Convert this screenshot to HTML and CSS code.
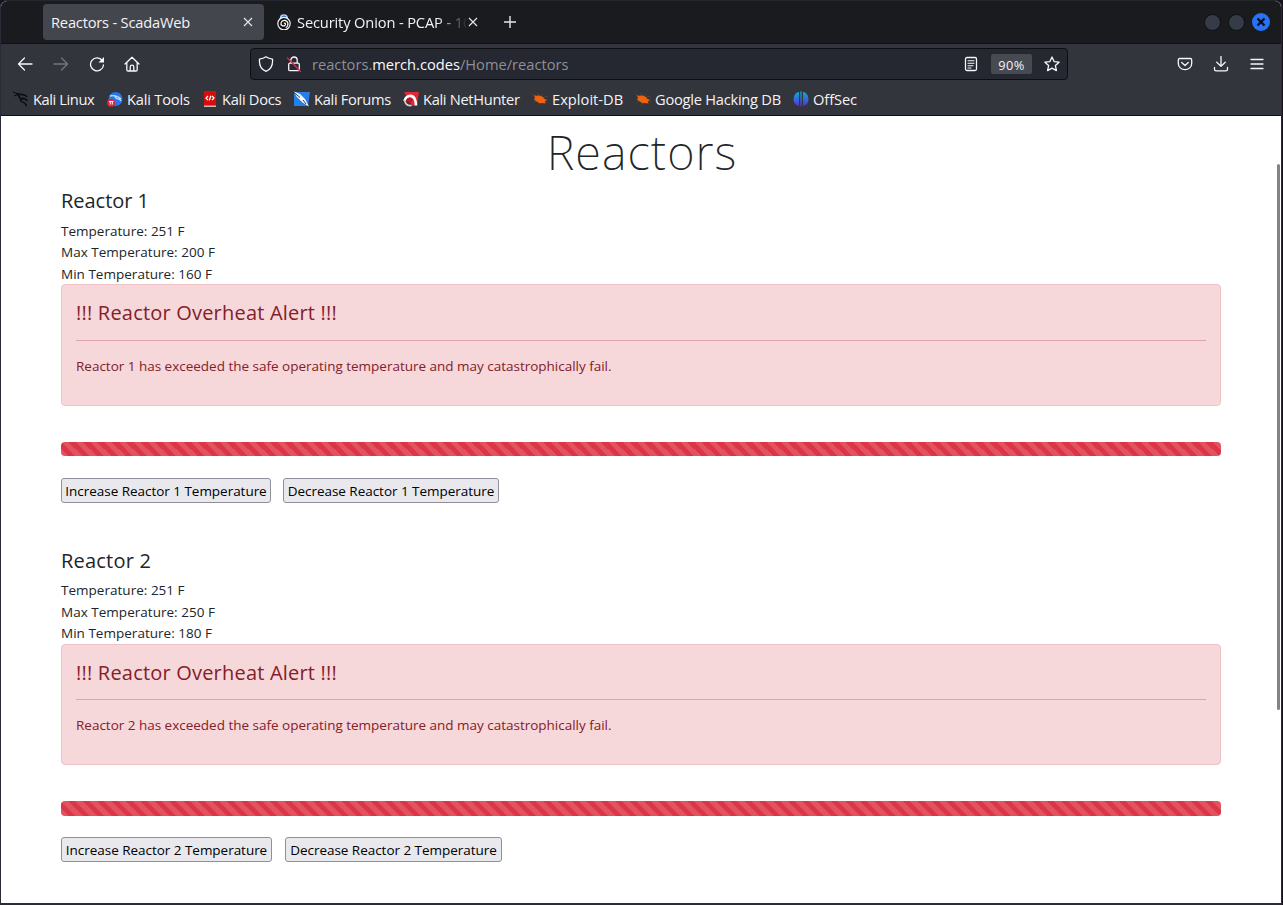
FILE: index.html
```html
<!DOCTYPE html>
<html lang="en">
<head>
<meta charset="utf-8">
<title>Reactors - ScadaWeb</title>
<link rel="stylesheet" href="styles.css">
</head>
<body>
<div class="window">
  <header class="tabbar">
    <div class="tab active"><span class="tab-title">Reactors - ScadaWeb</span>
      <svg class="close" viewBox="0 0 10 10"><path d="M1 1l8 8M9 1l-8 8"/></svg></div>
    <div class="tab second">
      <svg class="favicon" viewBox="0 0 16 16"><path d="M4.800 5V3.700C5 .3 10.500 .3 11 3.700V5" fill="none" stroke="#a9cdf2" stroke-width="2"/><path d="M6 3l2-1 2 1" stroke="#1e70c4" fill="none"/><circle cx="8" cy="9.600" r="6.200" fill="#111" stroke="#f5f5f5" stroke-width="1.200"/><path d="M8 9.500c1-1 2.300.6 1 1.800-2 1.700-4.700-.3-3.900-2.700 1-3.200 6-3 6.800.5.300 2-.7 3.700-2.200 4.400" fill="none" stroke="#fff" stroke-width="1.200"/></svg>
      <span class="tab-title onion">Security Onion - PCAP - 10</span>
      <svg class="close" viewBox="0 0 10 10"><path d="M1 1l8 8M9 1l-8 8"/></svg></div>
    <svg class="plus" viewBox="0 0 12 12"><path d="M6 0v12M0 6h12"/></svg>
    <div class="controls"><i></i><i></i><b><svg viewBox="0 0 10 10"><path d="M1.500 1.500l7 7M8.500 1.500l-7 7"/></svg></b></div>
  </header>
  <nav class="toolbar">
    <svg class="ic back" viewBox="0 0 16 16"><path d="M15 8H1.500M7.500 2L1.500 8l6 6"/></svg>
    <svg class="ic forward" viewBox="0 0 16 16"><path d="M1 8h13.500M8.500 2l6 6-6 6"/></svg>
    <svg class="ic reload" viewBox="0 0 16 16"><path d="M13.300 4.500A6.500 6.500 0 1 0 14.500 9"/><path d="M15 1v5.500H9.500z" fill="#fbfbfe" stroke="none"/></svg>
    <svg class="ic home" viewBox="0 0 16 16"><path d="M1 8l7-6.800L15 8M2.800 6.500v7.200q0 1.300 1.300 1.300h7.800q1.300 0 1.300-1.300V6.500M6.200 15v-4q0-1.800 1.800-1.800T9.800 11v4"/></svg>
    <div class="urlbar">
      <svg class="ic shield" viewBox="0 0 16 16"><path d="M8 .8C6 2.300 3.800 2.900 1.500 3.200 1 9 3.200 13.500 8 15.300c4.800-1.800 7-6.300 6.500-12.100C12.200 2.900 10 2.300 8 .8z"/></svg>
      <svg class="ic lock" viewBox="0 0 16 16"><path d="M4.800 7V4.200a3.200 3.200 0 0 1 6.400 0V7M4 7.200h8q1.300 0 1.300 1.200v5q0 1.200-1.300 1.200H4q-1.300 0-1.300-1.200v-5Q2.700 7.200 4 7.200z"/><path d="M1.500 2l13 13.500" stroke="#e22850"/></svg>
      <span class="url">reactors.<em>merch.codes</em>/Home/reactors</span>
      <svg class="ic reader" viewBox="0 0 16 16"><rect x="2.500" y="1.500" width="11" height="13" rx="1.500"/><path d="M5 4.800h6M5 7.300h6M5 9.700h5M5 12h3" stroke-width="1.100"/></svg>
      <span class="zoom">90%</span>
      <svg class="ic star" viewBox="0 0 16 16"><path d="M8 1l2.100 4.600 5 .6-3.700 3.400 1 5L8 12.100l-4.400 2.500 1-5L.9 6.200l5-.6z"/></svg>
    </div>
    <div class="tools">
      <svg class="ic" viewBox="0 0 16 16"><path d="M2.800 2.500h10.400q1.500 0 1.500 1.500v3.500a6.700 6.200 0 0 1-13.400 0V4q0-1.500 1.500-1.500zM4.700 6.500L8 9.500l3.300-3"/></svg>
      <svg class="ic" viewBox="0 0 16 16"><path d="M8 .5v9.800M3.800 6.300L8 10.400l4.200-4.100M1.500 11.500v1.700q0 1.600 1.600 1.600h9.800q1.600 0 1.600-1.600v-1.700"/></svg>
      <svg class="ic" viewBox="0 0 16 16"><path d="M2 3.500h12M2 8h12M2 12.500h12"/></svg>
    </div>
  </nav>
  <nav class="bookmarks">
    <a class="bm linux"><svg viewBox="0 0 16 16"><g fill="none" stroke="#08090b"><path d="M0 1l4 1.500 5 .8M1 5l4-1.500" stroke-width="1"/><path d="M4 3l3 1.500M6 4c-1 3 2 3.500 4 3.500 2.500.2 3.500 1 4 2.500" stroke-width="1.500"/><path d="M10 8c-3-.5-3.500 2-1 2.800 3 .7 4 2 4.500 4.700M8 3.500l4 .5 2 2" stroke-width="1.300"/></g></svg>Kali Linux</a>
    <a class="bm ktools"><svg viewBox="0 0 16 16"><circle cx="8.500" cy="8" r="7" fill="#2777ec"/><path d="M3 5c4-1 7-1 11 3M8 5c0 4 5 2 6 5" fill="none" stroke="#b9dcff" stroke-width="1.300"/><circle cx="4" cy="11.700" r="4" fill="#e52236"/><path d="M2 10.500h4.500M3.300 10.500v3M5.300 10.500v3" stroke="#fff" fill="none"/></svg>Kali Tools</a>
    <a class="bm docs"><svg viewBox="0 0 16 16"><path d="M2 0h12v15H2z" fill="#d90c0c"/><path d="M2 14.500h12V16H2z" fill="#c9b8b8"/><path d="M6 5L4 7.200l2 2M10 5l2 2-2 2.200M8.800 4.800L7.300 9.500" fill="none" stroke="#fff" stroke-width="1.200"/></svg>Kali Docs</a>
    <a class="bm forums"><svg viewBox="0 0 16 16"><path d="M0 1h16l-2 14H0z" fill="#267eea"/><path d="M0 .5l6 2.500 5 5 4 7.500-6.500-4L2.500 5.500z" fill="#f7f7f7"/><path d="M0 1.500l6 5M9 9l3 4" stroke="#25282e" stroke-width=".9"/></svg>Kali Forums</a>
    <a class="bm hunter"><svg viewBox="0 0 16 16"><path d="M1 1h15l-2 13-5 1z" fill="#e22837"/><path d="M1.500 10C3 4 9 3.500 11.500 7.500c1 2 1.500 4 1.500 7" fill="none" stroke="#fff" stroke-width="2.600"/><path d="M1.500 9c1 5 4 6 7 5.500" fill="none" stroke="#f4c9cf" stroke-width="1.500"/><path d="M2.500 10c2-3.500 6-4 7.500-1l-3 3z" fill="#b3182d"/></svg>Kali NetHunter</a>
    <a class="bm exploit"><svg viewBox="0 0 16 16"><path d="M0 3l6 4M5 2l4 5M10 3v4M2 11l5-2M6 14l3-4M11 13l-1-4M12 6l4-1M13 9l3 2" stroke="#67442f" stroke-width=".8"/><path d="M2 4.500l2.500.3 3-.3 3.500 1.500 1.500 2 2.500.7-2 1.500.5 2.300-3-.5-3 .3-3.500-2.300L2 8.500l1-1.500z" fill="#ee610e"/></svg>Exploit-DB</a>
    <a class="bm ghdb"><svg viewBox="0 0 16 16"><path d="M0 3l6 4M5 2l4 5M10 3v4M2 11l5-2M6 14l3-4M11 13l-1-4M12 6l4-1M13 9l3 2" stroke="#67442f" stroke-width=".8"/><path d="M2 4.500l2.500.3 3-.3 3.500 1.500 1.500 2 2.500.7-2 1.500.5 2.300-3-.5-3 .3-3.500-2.300L2 8.500l1-1.500z" fill="#ee610e"/></svg>Google Hacking DB</a>
    <a class="bm offsec"><svg viewBox="0 0 16 16"><defs><linearGradient id="og" x2="0" y2="1"><stop stop-color="#08b1cd"/><stop offset="1" stop-color="#592bdb"/></linearGradient></defs><path d="M6 .8v14.400Q.5 13.500.5 8T6 .8zM7.300 .5h1.400v15H7.300zM10 .8v14.400Q15.500 13.500 15.500 8T10 .8z" fill="url(#og)"/></svg>OffSec</a>
  </nav>
  <main class="page">
    <h1>Reactors</h1>
    <section class="reactor">
      <h4>Reactor 1</h4>
      <div class="readings"><p>Temperature: 251 F</p><p>Max Temperature: 200 F</p><p>Min Temperature: 160 F</p></div>
      <div class="alert"><h4>!!! Reactor Overheat Alert !!!</h4><hr><p>Reactor 1 has exceeded the safe operating temperature and may catastrophically fail.</p></div>
      <div class="progress"></div>
      <div class="buttons one"><button>Increase Reactor 1 Temperature</button><button>Decrease Reactor 1 Temperature</button></div>
    </section>
    <section class="reactor">
      <h4 class="wide">Reactor 2</h4>
      <div class="readings"><p>Temperature: 251 F</p><p>Max Temperature: 250 F</p><p>Min Temperature: 180 F</p></div>
      <div class="alert"><h4>!!! Reactor Overheat Alert !!!</h4><hr><p>Reactor 2 has exceeded the safe operating temperature and may catastrophically fail.</p></div>
      <div class="progress"></div>
      <div class="buttons two"><button>Increase Reactor 2 Temperature</button><button>Decrease Reactor 2 Temperature</button></div>
    </section>
    <div class="scrollbar"></div>
  </main>
</div>
</body>
</html>
```
FILE: styles.css
```css
* { box-sizing: border-box; }
body { margin: 0; background: #15121b; font-family: "Open Sans", "Noto Sans", sans-serif; }
.window { width: 1282px; height: 905px; border: 1px solid #292c37; border-bottom-width: 2px; border-top-color: #24262d; border-radius: 7px 7px 0 0; overflow: hidden; display: flex; flex-direction: column; background: #fff; }
.tabbar { height: 43px; flex: none; background: #1a1b1f; border-bottom: 1px solid #101115; display: flex; align-items: center; padding: 0 11px 0 42px; color: #f3f3f6; font-size: 14.67px; }
.tab { display: flex; align-items: center; height: 36px; border-radius: 4px; }
.active { width: 221px; background: #44464d; padding: 0 11px 0 8px; justify-content: space-between; }
.tab-title { white-space: nowrap; letter-spacing: -.2px; }
.second { width: 220px; padding-left: 12px; }
.favicon { width: 16px; height: 16px; margin-right: 5px; flex: none; }
.onion { width: 171px; letter-spacing: -.14px; -webkit-mask-image: linear-gradient(90deg, #000 82%, transparent 100%); mask-image: linear-gradient(90deg, #000 82%, transparent 100%); }
.close { width: 10px; height: 10px; flex: none; }
.close path, .plus path { fill: none; stroke: #e8e8eb; stroke-width: 1.1; }
.plus { width: 12px; height: 12px; margin-left: 20px; }
.plus path { stroke-width: 1.4; }
.controls { margin-left: auto; display: flex; gap: 7px; align-items: center; }
.controls i { width: 17px; height: 17px; border: 1px solid #0c0d11; border-radius: 50%; background: #363b48; }
.controls b { width: 18px; height: 18px; border-radius: 50%; background: #2673f6; display: grid; place-items: center; }
.controls b svg { width: 10px; height: 10px; }
.controls b path { stroke: #0a1020; stroke-width: 2.4; }
.toolbar { height: 41px; flex: none; background: #33353c; display: flex; align-items: center; padding: 0 16px 2px 16px; }
.ic { width: 16px; height: 16px; flex: none; fill: none; stroke: #f7f7fa; stroke-width: 1.3; stroke-linecap: round; stroke-linejoin: round; }
.forward { margin-left: 20px; stroke: #74767b; }
.reload { margin-left: 20px; }
.home { margin-left: 19px; }
.urlbar { width: 818px; height: 32px; margin-left: 110px; background: #252731; border: 1px solid #0e0f13; border-radius: 4px; display: flex; align-items: center; padding: 0 7px; }
.lock { margin-left: 12px; }
.url { margin-left: 10px; color: #8e9096; font-size: 14.67px; margin-right: auto; }
.url em { font-style: normal; color: #fbfbfe; }
.zoom { width: 41px; height: 20px; margin: 0 12px; border-radius: 2px; background: #484a52; color: #f1f1f4; font-size: 12.8px; line-height: 22px; text-align: center; letter-spacing: .4px; }
.tools { margin-left: auto; display: flex; gap: 20px; }
.bookmarks { height: 31px; flex: none; background: #33353c; border-bottom: 1px solid #111217; display: flex; align-items: center; padding: 0 0 2px 12px; color: #f3f3f6; font-size: 14.67px; }
.bm { display: flex; align-items: center; gap: 4px; white-space: nowrap; letter-spacing: -.3px; }
.bm svg { width: 16px; height: 16px; flex: none; }
.linux { width: 94px; letter-spacing: -.4px; }
.ktools { width: 95px; letter-spacing: -.2px; }
.docs { width: 92px; }
.forums { width: 109px; }
.hunter { width: 129px; letter-spacing: -.32px; }
.exploit { width: 103px; letter-spacing: .02px; }
.ghdb { width: 158px; letter-spacing: -.25px; }
.offsec { letter-spacing: -.1px; }
.page { position: relative; flex: 1; padding: 8px 60px 0; color: #212529; font-size: 13.5px; line-height: 21.6px; }
h1, h4, p { margin: 0; }
h1 { height: 62.4px; text-align: center; font-family: "Noto Sans", sans-serif; font-size: 47px; font-weight: 200; line-height: 56px; letter-spacing: 1px; padding-left: 2px; }
h4 { font-size: 20px; font-weight: 400; line-height: 29px; margin-bottom: 5.4px; letter-spacing: -.03px; }
.reactor { height: 359.3px; }
.readings { margin-bottom: -1.3px; letter-spacing: .02px; }
.wide { letter-spacing: .2px; }
.alert { height: 121.8px; padding: 14px; border: 1px solid #f0c1c7; border-radius: 4px; background: #f6d7da; color: #842029; margin-bottom: 36px; }
.alert h4 { margin: 0; line-height: 28.6px; letter-spacing: .2px; }
.alert hr { border: 0; height: 1px; background: #dca4aa; margin: 11.7px 0 15.4px; }
.alert p { letter-spacing: -.012px; }
.progress { height: 14.4px; margin-bottom: 21.6px; border-radius: 4px; background: #dc3545 linear-gradient(45deg, rgba(255,255,255,.15) 25%, transparent 25%, transparent 50%, rgba(255,255,255,.15) 50%, rgba(255,255,255,.15) 75%, transparent 75%) 0 0 / 14.4px 14.4px; }
.buttons { display: flex; gap: 12px; }
.buttons button { height: 25px; width: 210px; padding: 1px 0 0; border: 1px solid #8f8f9d; border-radius: 3px; background: #e9e9ed; color: #000; font: 13.5px/23px "Open Sans", "Noto Sans", sans-serif; letter-spacing: -.03px; white-space: nowrap; }
.buttons button + button { width: 216px; }
.two { gap: 13px; }
.buttons.two button { width: 211px; }
.buttons.two button + button { width: 217px; }
.scrollbar { position: absolute; right: 1px; top: 48px; width: 3px; height: 546px; background: #7f8583; border-radius: 2px; }
```
